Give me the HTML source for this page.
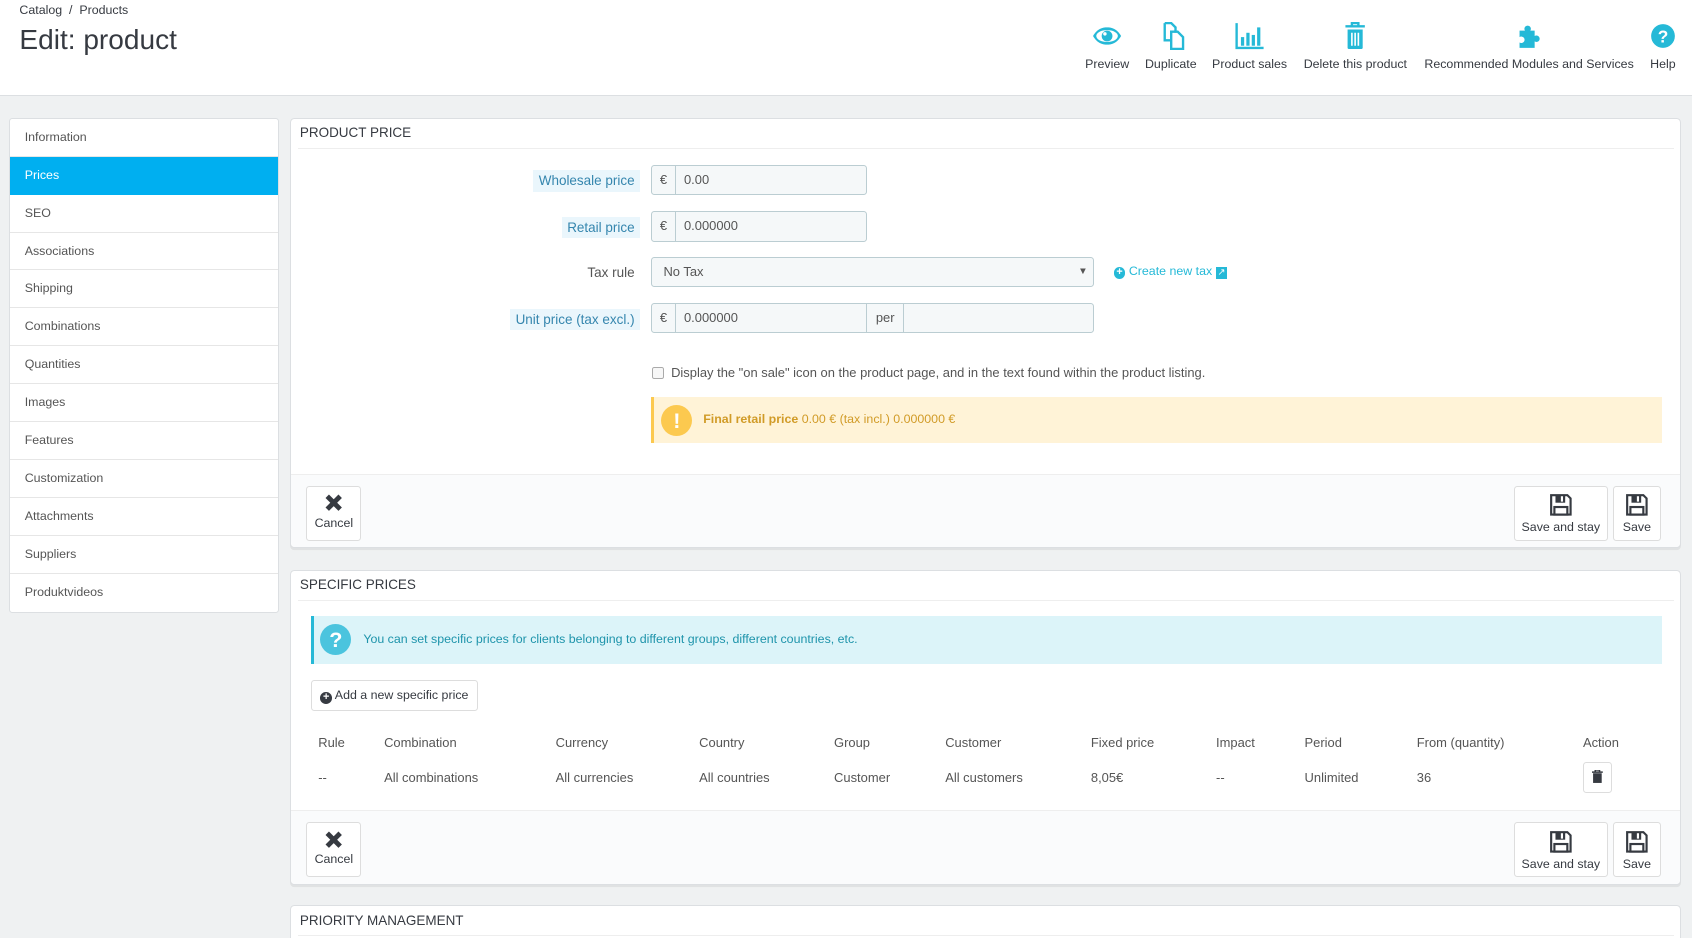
<!DOCTYPE html>
<html><head><meta charset="utf-8"><style>
*{box-sizing:border-box;margin:0;padding:0}
html,body{width:1692px;height:938px;overflow:hidden;background:#eff1f2}
#w{zoom:1.0791;width:1568px;height:870px;position:relative;font-family:"Liberation Sans",sans-serif;font-size:12px;color:#555;background:#eff1f2}
.a{position:absolute}
.hdr{left:0;top:0;width:1568px;height:89px;background:#fff;border-bottom:1px solid #dcdfe2}
.tb{top:20px;text-align:center;font-size:11.5px;color:#363a41;white-space:nowrap;transform:translateX(-50%)}
.tb svg{display:block;margin:0 auto 7px;height:26px}
.side{left:8px;top:109px;width:251px;background:#fff;border:1px solid #dcdfe2;border-radius:3px}
.side div{height:35.2px;line-height:35px;padding-left:14px;border-bottom:1px solid #e6e6e6;color:#555;font-size:11.5px}
.side div:last-child{border-bottom:0}
.side .on{background:#00aff0;color:#fff;border-bottom:0}
.panel{left:269px;width:1289px;background:#fff;border:1px solid #dcdfe2;border-radius:4px;box-shadow:0 2px 0 rgba(0,0,0,.06)}
.ph{position:absolute;left:8px;top:6px;font-family:"Liberation Sans Narrow","Liberation Sans",sans-serif;font-size:12.5px;color:#363a41}
.pl{position:absolute;left:6px;right:6px;top:27px;border-top:1px solid #eee}
.foot{position:absolute;left:0;right:0;bottom:0;height:68px;background:#fafbfc;border-top:1px solid #eee;border-radius:0 0 4px 4px}
.btn{position:absolute;background:#fff;border:1px solid #ddd;border-radius:3px;text-align:center;font-size:11.5px;color:#363a41;padding-top:6px}
.btn svg{display:block;margin:0 auto 3px}
.lbl{position:absolute;right:964px;height:20px;line-height:20px;padding:0 5px;font-size:12.5px;color:#555}
.lbl.h{background:#eaf6fc;color:#3586ae}
.in{position:absolute;background:#f5f8f9;border:1px solid #bbcdd2;border-radius:3px;height:28px;line-height:26px;font-size:12px;color:#555}
.ad{position:absolute;top:0;bottom:0;border-right:1px solid #bbcdd2;text-align:center}
</style></head><body><div id="w">
<div class="a hdr"></div>
<div class="a" style="left:18px;top:3px;font-size:11.5px;color:#363a41">Catalog &nbsp;/&nbsp; Products</div>
<div class="a" style="left:18px;top:22px;font-size:26px;color:#363a41">Edit: product</div>

<div class="a tb" style="left:1026px"><svg width="28" viewBox="0 0 28 18"><path d="M1 9C5 2 10 1 14 1s9 1 13 8c-4 7-9 8-13 8S5 16 1 9z" fill="#25b9d7"/><ellipse cx="14" cy="9" rx="10" ry="5.5" fill="#fff"/><circle cx="14" cy="9" r="5" fill="#25b9d7"/><circle cx="12" cy="7" r="1.6" fill="#fff"/></svg>Preview</div>
<div class="a tb" style="left:1085px"><svg width="26" viewBox="0 0 26 26"><path d="M7 1h6l4 4v5M7 1v16h6" fill="none" stroke="#25b9d7" stroke-width="2.2"/><path d="M13 9h6l5 5v11H13z" fill="none" stroke="#25b9d7" stroke-width="2.2"/></svg>Duplicate</div>
<div class="a tb" style="left:1158px"><svg width="28" viewBox="0 0 28 26"><path d="M2 1v23h25" fill="none" stroke="#25b9d7" stroke-width="2.2"/><rect x="6" y="14" width="3" height="8" fill="#25b9d7"/><rect x="11" y="10" width="3" height="12" fill="#25b9d7"/><rect x="16" y="12" width="3" height="10" fill="#25b9d7"/><rect x="21" y="5" width="3" height="17" fill="#25b9d7"/></svg>Product sales</div>
<div class="a tb" style="left:1256px"><svg width="20" viewBox="0 0 20 26"><path d="M1 4h18M7 4V1h6v3" fill="none" stroke="#25b9d7" stroke-width="2.2"/><path d="M3 7h14v17a1 1 0 0 1-1 1H4a1 1 0 0 1-1-1z" fill="#25b9d7"/><path d="M7 10v12M10 10v12M13 10v12" stroke="#fff" stroke-width="1.5"/></svg>Delete this product</div>
<div class="a tb" style="left:1417px"><svg width="24" viewBox="0 0 24 26"><path d="M3 8h5a3 3 0 1 1 5 0h4v5a3 3 0 1 1 0 5v6H3v-5a3 3 0 1 0 0-5z" fill="#25b9d7"/></svg>Recommended Modules and Services</div>
<div class="a tb" style="left:1541px"><svg width="24" viewBox="0 0 24 26"><circle cx="12" cy="13" r="11" fill="#25b9d7"/><text x="12" y="19" text-anchor="middle" font-family="Liberation Sans" font-weight="bold" font-size="16" fill="#fff">?</text></svg>Help</div>

<div class="a side">
<div>Information</div><div class="on">Prices</div><div>SEO</div><div>Associations</div><div>Shipping</div><div>Combinations</div><div>Quantities</div><div>Images</div><div>Features</div><div>Customization</div><div>Attachments</div><div>Suppliers</div><div>Produktvideos</div>
</div>

<div class="a panel" style="top:109px;height:399px">
<div class="ph">PRODUCT PRICE</div><div class="pl"></div>
<div class="lbl h" style="top:48px">Wholesale price</div>
<div class="in" style="left:333px;top:43px;width:201px"><div class="ad" style="left:0;width:23px">€</div><span style="position:absolute;left:30px">0.00</span></div>
<div class="lbl h" style="top:91px">Retail price</div>
<div class="in" style="left:333px;top:86px;width:201px"><div class="ad" style="left:0;width:23px">€</div><span style="position:absolute;left:30px">0.000000</span></div>
<div class="lbl" style="top:133px">Tax rule</div>
<div class="in" style="left:333px;top:128px;width:411px"><span style="position:absolute;left:11px">No Tax</span><span style="position:absolute;right:5px;font-size:9px">▼</span></div>
<div class="a" style="left:762px;top:135px;color:#25b9d7;font-size:11.5px"><span style="display:inline-block;width:11px;height:11px;border-radius:50%;background:#25b9d7;color:#fff;font-size:10px;line-height:11px;text-align:center;font-weight:bold">+</span> Create new tax <span style="display:inline-block;width:11px;height:11px;background:#25b9d7;color:#fff;font-size:9px;line-height:11px;text-align:center">↗</span></div>
<div class="lbl h" style="top:176px">Unit price (tax excl.)</div>
<div class="in" style="left:333px;top:171px;width:411px"><div class="ad" style="left:0;width:23px">€</div><span style="position:absolute;left:30px">0.000000</span><div class="ad" style="left:199px;width:35px;border-left:1px solid #bbcdd2">per</div></div>
<div class="a" style="left:334px;top:230px;width:11px;height:11px;border:1px solid #aaa;border-radius:2px;background:#f7f7f7"></div>
<div class="a" style="left:352px;top:228px;font-size:12px;color:#555">Display the "on sale" icon on the product page, and in the text found within the product listing.</div>
<div class="a" style="left:333px;top:258px;width:937px;height:43px;background:#fff3d7;border-left:3px solid #fcc94f"><div class="a" style="left:7px;top:7px;width:29px;height:29px;border-radius:50%;background:#fcc94f;color:#fff;font-weight:bold;font-size:20px;text-align:center;line-height:29px">!</div><div class="a" style="left:46px;top:14px;color:#d19b27;font-size:11.5px"><b>Final retail price</b> 0.00 € (tax incl.) 0.000000 €</div></div>
<div class="foot">
<div class="btn" style="left:14px;top:10px;width:51px;height:51px"><svg width="18" height="18" viewBox="0 0 18 18"><path d="M3 3l12 12M15 3L3 15" stroke="#363a41" stroke-width="4.5"/></svg>Cancel</div>
<div class="btn" style="left:1133px;top:10px;width:87px;height:51px"><svg width="22" height="22" viewBox="0 0 22 22"><path d="M2 2h15l3 3v15H2z" fill="none" stroke="#363a41" stroke-width="2"/><rect x="6" y="2" width="9" height="7" fill="#363a41"/><rect x="11" y="3" width="2" height="5" fill="#fff"/><rect x="5" y="13" width="12" height="7" fill="none" stroke="#363a41" stroke-width="2"/></svg>Save and stay</div>
<div class="btn" style="left:1225px;top:10px;width:44px;height:51px"><svg width="22" height="22" viewBox="0 0 22 22"><path d="M2 2h15l3 3v15H2z" fill="none" stroke="#363a41" stroke-width="2"/><rect x="6" y="2" width="9" height="7" fill="#363a41"/><rect x="11" y="3" width="2" height="5" fill="#fff"/><rect x="5" y="13" width="12" height="7" fill="none" stroke="#363a41" stroke-width="2"/></svg>Save</div>
</div>
</div>

<div class="a panel" style="top:528px;height:292px">
<div class="ph">SPECIFIC PRICES</div><div class="pl"></div>
<div class="a" style="left:18px;top:42px;width:1252px;height:44px;background:#dcf4f9;border-left:3px solid #25b9d7"><div class="a" style="left:6px;top:7px;width:29px;height:29px;border-radius:50%;background:#4bc4de;color:#fff;font-weight:bold;font-size:20px;text-align:center;line-height:29px">?</div><div class="a" style="left:46px;top:15px;color:#1e94ab;font-size:11.5px">You can set specific prices for clients belonging to different groups, different countries, etc.</div></div>
<div class="btn" style="left:18px;top:101px;width:155px;height:29px;padding-top:7px;font-size:11.5px"><span style="display:inline-block;width:11px;height:11px;border-radius:50%;background:#363a41;color:#fff;font-size:10px;line-height:11px;text-align:center;font-weight:bold;vertical-align:-1px">+</span> Add a new specific price</div>
<div class="a" style="left:25px;top:152px">Rule</div><div class="a" style="left:86px;top:152px">Combination</div><div class="a" style="left:245px;top:152px">Currency</div><div class="a" style="left:378px;top:152px">Country</div><div class="a" style="left:503px;top:152px">Group</div><div class="a" style="left:606px;top:152px">Customer</div><div class="a" style="left:741px;top:152px">Fixed price</div><div class="a" style="left:857px;top:152px">Impact</div><div class="a" style="left:939px;top:152px">Period</div><div class="a" style="left:1043px;top:152px">From (quantity)</div><div class="a" style="left:1197px;top:152px">Action</div>
<div class="a" style="left:25px;top:185px">--</div><div class="a" style="left:86px;top:185px">All combinations</div><div class="a" style="left:245px;top:185px">All currencies</div><div class="a" style="left:378px;top:185px">All countries</div><div class="a" style="left:503px;top:185px">Customer</div><div class="a" style="left:606px;top:185px">All customers</div><div class="a" style="left:741px;top:185px">8,05€</div><div class="a" style="left:857px;top:185px">--</div><div class="a" style="left:939px;top:185px">Unlimited</div><div class="a" style="left:1043px;top:185px">36</div>
<div class="btn" style="left:1197px;top:177px;width:27px;height:29px;padding-top:7px"><svg width="10" height="12" viewBox="0 0 10 12"><path d="M0 2h10M3 2V0h4v2" stroke="#363a41" stroke-width="1.4" fill="none"/><path d="M1 3h8v9H1z" fill="#363a41"/></svg></div>
<div class="foot">
<div class="btn" style="left:14px;top:10px;width:51px;height:51px"><svg width="18" height="18" viewBox="0 0 18 18"><path d="M3 3l12 12M15 3L3 15" stroke="#363a41" stroke-width="4.5"/></svg>Cancel</div>
<div class="btn" style="left:1133px;top:10px;width:87px;height:51px"><svg width="22" height="22" viewBox="0 0 22 22"><path d="M2 2h15l3 3v15H2z" fill="none" stroke="#363a41" stroke-width="2"/><rect x="6" y="2" width="9" height="7" fill="#363a41"/><rect x="11" y="3" width="2" height="5" fill="#fff"/><rect x="5" y="13" width="12" height="7" fill="none" stroke="#363a41" stroke-width="2"/></svg>Save and stay</div>
<div class="btn" style="left:1225px;top:10px;width:44px;height:51px"><svg width="22" height="22" viewBox="0 0 22 22"><path d="M2 2h15l3 3v15H2z" fill="none" stroke="#363a41" stroke-width="2"/><rect x="6" y="2" width="9" height="7" fill="#363a41"/><rect x="11" y="3" width="2" height="5" fill="#fff"/><rect x="5" y="13" width="12" height="7" fill="none" stroke="#363a41" stroke-width="2"/></svg>Save</div>
</div>
</div>

<div class="a panel" style="top:839px;height:60px">
<div class="ph">PRIORITY MANAGEMENT</div><div class="pl"></div>
</div>
</div></body></html>
